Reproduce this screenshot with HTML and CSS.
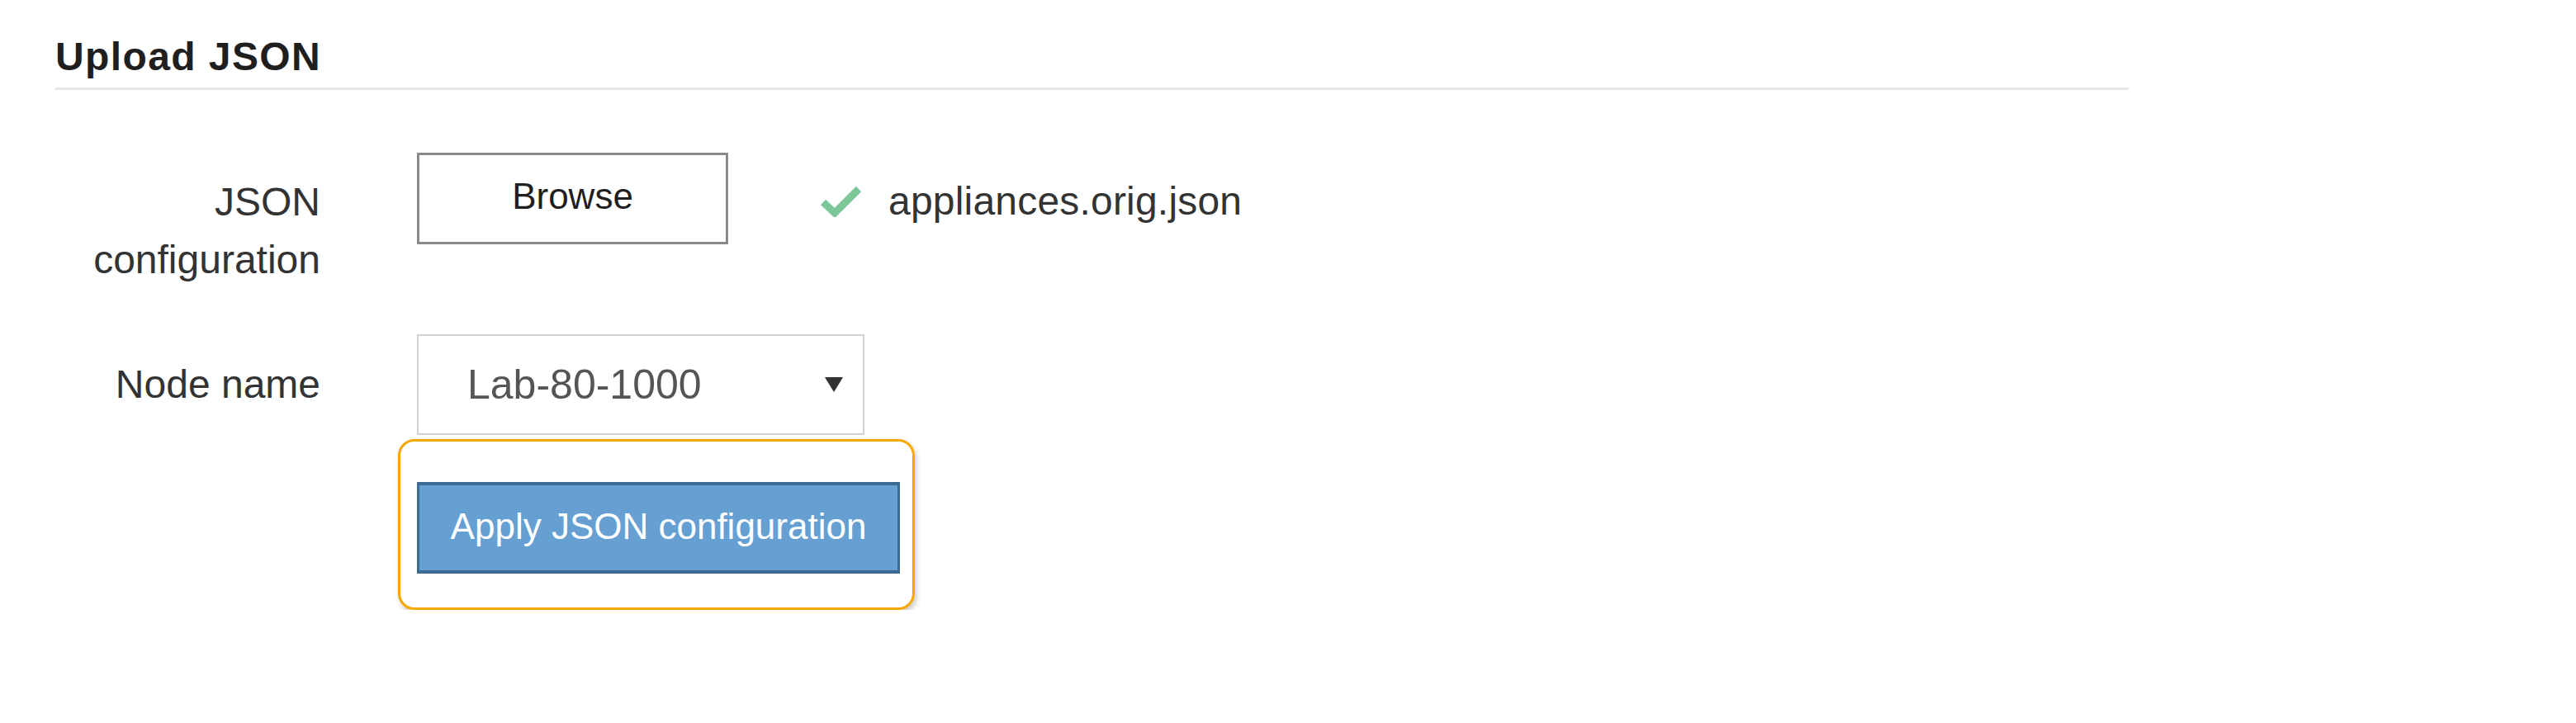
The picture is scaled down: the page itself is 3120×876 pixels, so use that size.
FILE: index.html
```html
<!DOCTYPE html>
<html lang="en">
<head>
<meta charset="utf-8">
<title>Upload JSON</title>
<link rel="stylesheet" href="styles.css">
</head>
<body>
<section class="panel">
  <h2 class="title">Upload JSON</h2>
  <div class="form">
    <div class="row row-file">
      <div class="label label-two">JSON<br>configuration</div>
      <div class="controls">
        <button class="browse">Browse</button>
        <div class="file">
          <svg class="check" width="51" height="39" viewBox="0 0 51 39" aria-hidden="true">
            <polyline points="4,21 18,34 47,5" fill="none" stroke="#7cc898" stroke-width="9" stroke-linejoin="miter"/>
          </svg>
          <span class="filename">appliances.orig.json</span>
        </div>
      </div>
    </div>
    <div class="row row-node">
      <div class="label">Node name</div>
      <div class="controls">
        <div class="select">
          <span class="select-value">Lab-80-1000</span>
          <span class="caret"></span>
        </div>
      </div>
    </div>
    <div class="row row-apply">
      <div class="label"></div>
      <div class="controls">
        <div class="highlight">
          <button class="apply">Apply JSON configuration</button>
        </div>
      </div>
    </div>
  </div>
</section>
</body>
</html>
```

FILE: styles.css
```css
html, body {
  margin: 0;
  padding: 0;
  background: #ffffff;
}

body {
  font-family: "Liberation Sans", Arial, Helvetica, sans-serif;
  color: #333333;
}

.panel {
  padding: 39px 0 0 67px;
  width: 2511px;
}

.title {
  margin: 0;
  font-size: 48px;
  font-weight: bold;
  letter-spacing: 1.4px;
  line-height: 60px;
  color: #1f1f1f;
  padding-bottom: 7px;
  border-bottom: 3px solid #e6e6e6;
}

.form {
  display: flex;
  flex-direction: column;
}

.row {
  display: flex;
  gap: 117px;
}

.label {
  width: 321px;
  flex: none;
  text-align: right;
  font-size: 48px;
  line-height: 70px;
  color: #333333;
}

.controls {
  display: flex;
  align-items: center;
}

.row-file {
  margin-top: 76px;
  align-items: flex-start;
}

.row-file .label {
  margin-top: 25px;
}

.row-file .controls {
  gap: 0;
}

.browse {
  width: 377px;
  height: 111px;
  box-sizing: border-box;
  border: 3px solid #8a8a8a;
  background: #ffffff;
  font-family: "Liberation Sans", Arial, Helvetica, sans-serif;
  font-size: 44px;
  color: #1f1f1f;
  padding: 0 0 5px 0;
  margin: 0;
}

.file {
  display: flex;
  align-items: center;
  gap: 32px;
  margin-left: 111px;
  margin-top: 6px;
}

.check {
  display: block;
  flex: none;
}

.filename {
  font-size: 48px;
  color: #333333;
  letter-spacing: 0.2px;
}

.row-node {
  margin-top: 55px;
  align-items: center;
}

.select {
  width: 542px;
  height: 122px;
  box-sizing: border-box;
  border: 2px solid #d0d0d0;
  display: flex;
  align-items: center;
  justify-content: space-between;
  padding: 0 24px 0 59px;
}

.select-value {
  font-size: 50px;
  color: #555555;
}

.caret {
  width: 0;
  height: 0;
  border-left: 11px solid transparent;
  border-right: 11px solid transparent;
  border-top: 18px solid #333333;
}

.row-apply {
  margin-top: 5px;
}

.highlight {
  margin-left: -23px;
  width: 626px;
  height: 207px;
  box-sizing: border-box;
  border: 3px solid #f6a800;
  border-radius: 20px;
  box-shadow: 2px 4px 6px rgba(0, 0, 0, 0.22);
  padding: 49px 0 0 20px;
}

.apply {
  display: block;
  width: 585px;
  height: 111px;
  box-sizing: border-box;
  margin: 0;
  background: #66a0d3;
  border: 3px solid #3b6a92;
  border-top-width: 4px;
  border-bottom-width: 4px;
  color: #ffffff;
  font-family: "Liberation Sans", Arial, Helvetica, sans-serif;
  font-size: 44px;
  padding: 0 0 4px 0;
}
```
